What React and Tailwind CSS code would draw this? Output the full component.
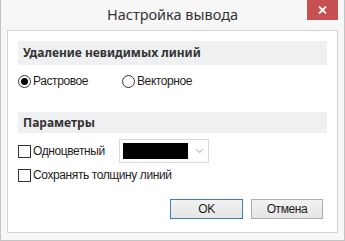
export default function App() {
  return (
    <div className="flex h-[241px] w-[345px] flex-col border border-t-0 border-[#c4c4c4] bg-[#f7f7f7] font-['Liberation_Sans',sans-serif] text-[12px] tracking-[-0.4px] text-[#1e1e1e]">
      <div className="relative flex h-[30px] shrink-0 items-center justify-center">
        <span className="font-['Noto_Sans',sans-serif] text-[14.5px] tracking-normal text-[#333]">Настройка вывода</span>
        <button className="absolute right-[6px] top-0 flex h-[20px] w-[31px] items-center justify-center bg-[#c75050]">
          <svg width="9" height="8" viewBox="0 0 9 8">
            <path d="M1 0.5 L8 7.5 M8 0.5 L1 7.5" stroke="#fff" strokeWidth="1.8" />
          </svg>
        </button>
      </div>

      <div className="mx-[6px] mb-[7px] flex flex-1 flex-col border border-[#d4d4d4] bg-white px-[10px] pt-[10px]">
        <div className="flex h-[24px] items-center bg-[#eff0f2] px-[5px] font-['Noto_Sans',sans-serif] font-bold tracking-normal text-[#333]">
          Удаление невидимых линий
        </div>
        <div className="mt-[9px] flex h-[14px] items-center">
          <label className="flex w-[104px] items-center gap-[2px]">
            <span className="flex h-[13px] w-[13px] items-center justify-center rounded-full border border-[#333]">
              <span className="h-[7px] w-[7px] rounded-full bg-black" />
            </span>
            Растровое
          </label>
          <label className="flex items-center gap-[2px]">
            <span className="h-[13px] w-[13px] rounded-full border border-[#333]" />
            Векторное
          </label>
        </div>

        <div className="mt-[24px] flex h-[21px] items-center bg-[#eff0f2] px-[5px] font-['Noto_Sans',sans-serif] font-bold tracking-normal text-[#333]">
          Параметры
        </div>
        <div className="mt-[6px] flex h-[24px] items-center">
          <label className="flex w-[101px] items-center gap-[2px]">
            <span className="h-[13px] w-[13px] border border-[#333]" />
            Одноцветный
          </label>
          <div className="flex h-[24px] w-[90px] items-center border border-[#dadada] pl-[3px]">
            <span className="h-[16px] w-[65px] bg-black" />
            <svg className="ml-[7px]" width="9" height="6" viewBox="0 0 9 6">
              <path d="M1 1 L4.5 4.5 L8 1" stroke="#c8c8c8" strokeWidth="1.3" fill="none" />
            </svg>
          </div>
        </div>
        <div className="mt-[5px] flex h-[14px] items-center">
          <label className="flex items-center gap-[2px]">
            <span className="h-[13px] w-[13px] border border-[#333]" />
            Сохранять толщину линий
          </label>
        </div>

        <div className="mt-[17px] flex justify-end gap-[8px] pr-[4px]">
          <button className="h-[20px] w-[73px] border border-[#3c7fb1] bg-gradient-to-b from-[#f2f2f2] to-[#e5e5e5] text-[12px] text-[#1e1e1e]">
            OK
          </button>
          <button className="h-[20px] w-[72px] border border-[#acacac] bg-gradient-to-b from-[#f2f2f2] to-[#e5e5e5] text-[12px] text-[#1e1e1e]">
            Отмена
          </button>
        </div>
      </div>
    </div>
  );
}
